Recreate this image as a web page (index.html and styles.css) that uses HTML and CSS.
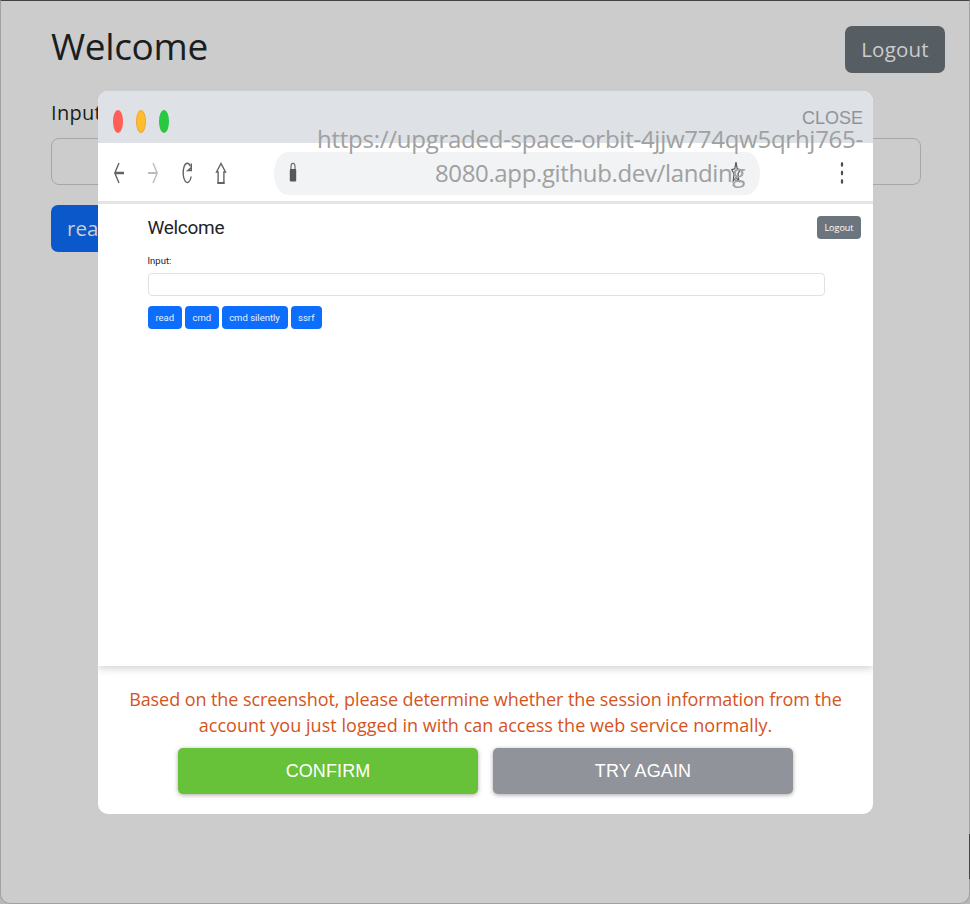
FILE: index.html
```html
<!DOCTYPE html>
<html lang="en">
<head>
<meta charset="utf-8">
<title>Welcome</title>
<link rel="stylesheet" href="styles.css">
</head>
<body>
<div class="window">
  <main class="page">
    <header class="page-head">
      <h1 class="page-title">Welcome</h1>
      <button class="btn btn-logout">Logout</button>
    </header>
    <label class="page-label">Input:</label>
    <div class="page-input"></div>
    <button class="btn btn-read">read</button>
  </main>
  <i class="edge-mark"></i>
</div>
<section class="modal">
  <div class="browser">
    <div class="tabs">
      <i class="dot red"></i><i class="dot yellow"></i><i class="dot green"></i>
    </div>
    <div class="toolbar">
      <svg class="nav" viewBox="0 0 12 24"><path d="M6 2L1.8 12L6 22" stroke="#5f6368"/><path d="M11 12H2" stroke="#5f6368" stroke-width="2.6"/></svg>
      <svg class="nav" viewBox="0 0 12 24"><path d="M6 2L10.2 12L6 22" stroke="#b9bbbd"/><path d="M1 12H10" stroke="#b9bbbd" stroke-width="2.2"/></svg>
      <svg class="nav" viewBox="0 0 12 24"><path d="M9.4 5.3A4.2 9.6 0 1 0 10.2 15.5" stroke="#5f6368"/><path d="M10.3 2.5V9.5H6.8L10.3 6.5" stroke="#5f6368"/></svg>
      <svg class="nav" viewBox="0 0 12 24"><path d="M1.5 11L6 2.5L10.5 11H8.9V22H3.1V11Z" stroke="#5f6368"/><path d="M2.5 22H9.5" stroke="#5f6368" stroke-width="2"/></svg>
      <div class="address">
        <svg class="lock" viewBox="0 0 8 20"><path d="M2 8V4.5Q2 1.2 4 1.2T6 4.5V8" fill="none" stroke="#5f6368" stroke-width="1.1"/><rect x=".8" y="7" width="6.4" height="12.5" rx="1" fill="#55585c"/></svg>
        <svg class="star" viewBox="0 0 12 22"><path d="M6 1L7.2 7.8L10.3 8.6L8 12.8L8.8 20L6 16.5L3.2 20L4 12.8L1.7 8.6L4.8 7.8Z" fill="none" stroke="#55585c" stroke-width="1.2"/></svg>
      </div>
      <svg class="menu" viewBox="0 0 4 24"><g fill="#4b4e52"><ellipse cx="2" cy="3.5" rx="1.2" ry="2.4"/><ellipse cx="2" cy="12" rx="1.2" ry="2.4"/><ellipse cx="2" cy="20.5" rx="1.2" ry="2.4"/></g></svg>
    </div>
    <div class="preview">
      <div class="mini-head">
        <div class="mini-title">Welcome</div>
        <div class="mini-btn mini-logout">Logout</div>
      </div>
      <div class="mini-label">Input:</div>
      <div class="mini-input"></div>
      <div class="mini-row">
        <div class="mini-btn w-read">read</div>
        <div class="mini-btn w-cmd">cmd</div>
        <div class="mini-btn w-silent">cmd silently</div>
        <div class="mini-btn w-ssrf">ssrf</div>
      </div>
    </div>
    <span class="close">CLOSE</span>
    <div class="url"><div class="url-a">https://upgraded-space-orbit-4jjw774qw5qrhj765-</div><div class="url-b">8080.app.github.dev/landing</div></div>
  </div>
  <div class="message"><div class="msg-a">Based on the screenshot, please determine whether the session information from the</div><div class="msg-b">account you just logged in with can access the web service normally.</div></div>
  <div class="actions">
    <button class="action confirm">CONFIRM</button>
    <button class="action retry">TRY AGAIN</button>
  </div>
</section>
</body>
</html>
```
FILE: styles.css
```css
* { box-sizing: border-box; }
body { margin: 0; width: 970px; height: 904px; background: #b8b8b8; position: relative; overflow: hidden; font-family: "Open Sans", "Noto Sans", sans-serif; }
button { border: 0; margin: 0; padding: 0; font-family: inherit; }
.window { width: 970px; height: 904px; background: #ccc; border: 1px solid #a2a2a2; border-top-color: #434145; border-radius: 0 0 10px 10px; position: relative; }
.page { padding: 25px 24px 0 50px; }
.page-head { display: flex; justify-content: space-between; align-items: flex-start; height: 72px; }
.page-title { margin: -2px 0 0; font-size: 37px; line-height: 44px; letter-spacing: -.35px; font-weight: 400; color: #1a1e21; white-space: nowrap; }
.btn { height: 47px; border-radius: 7px; font-size: 20.5px; color: #ccc; display: block; padding-bottom: 2px; }
.btn-logout { width: 100px; background: #565d63; letter-spacing: .2px; }
.page-label { display: block; height: 40px; line-height: 30px; font-size: 20px; letter-spacing: .3px; color: #1a1e21; }
.page-input { width: 870px; height: 47px; border: 1px solid #a5a8aa; border-radius: 8px; margin-bottom: 20px; }
.btn-read { width: 76px; background: #0a58ca; text-align: left; padding-left: 16px; }
.edge-mark { position: absolute; right: -1px; top: 833px; width: 1px; height: 45px; background: #444; }

.modal { position: absolute; left: 98px; top: 91px; width: 775px; height: 723px; background: #fff; border-radius: 10px; overflow: hidden; }
.browser { position: relative; height: 575px; box-shadow: 0 2px 8px rgba(0,0,0,.2); }
.tabs { height: 52px; background: #dee1e6; display: flex; gap: 13px; padding: 19px 0 0 15px; }
.dot { width: 10px; height: 23px; border-radius: 50%; }
.red { background: #ff5f57; }
.yellow { background: #febc2e; border: 1px solid #e8ab2e; }
.green { background: #28c840; }
.toolbar { height: 61px; border-bottom: 3px solid #e3e4e6; display: flex; align-items: center; padding: 2px 0 0 15px; }
.nav { width: 12px; height: 24px; margin-right: 22px; fill: none; stroke-width: 1.4; }
.address { width: 486px; height: 43px; margin-left: 25px; border-radius: 14px / 22px; background: #f1f3f4; display: flex; align-items: center; justify-content: space-between; padding: 0 18px 2px 15px; }
.lock { width: 8px; height: 20px; }
.star { width: 12px; height: 22px; }
.menu { width: 4px; height: 24px; margin-left: 80px; }
.close { position: absolute; top: 17px; right: 10px; font: 18px/20px "Liberation Sans", sans-serif; color: #909399; }
.url { position: absolute; top: 31px; right: 10px; width: 546px; text-align: center; font-size: 24px; line-height: 34px; color: #a0a0a0; white-space: nowrap; }
.url-a { letter-spacing: -.26px; }
.url-b { letter-spacing: -.36px; }
.preview { padding: 12px 12px 0 49.5px; font-family: Roboto, sans-serif; }
.mini-head { display: flex; justify-content: space-between; height: 40px; }
.mini-title { font-size: 19px; line-height: 23px; letter-spacing: -.3px; color: #212529; }
.mini-btn { height: 23px; line-height: 23px; text-align: center; border-radius: 4px; background: #0d6efd; color: #e7f0ff; font-size: 9.5px; }
.mini-logout { width: 44px; background: #6c757d; color: #fff; font-family: "Open Sans", sans-serif; font-size: 9px; }
.mini-label { height: 17px; line-height: 10px; font-size: 9.5px; color: #212529; }
.mini-input { width: 677px; height: 23px; border: 1px solid #dee2e6; border-radius: 4px; margin-bottom: 10px; }
.mini-row { display: flex; gap: 3px; }
.w-read { width: 34.5px; }
.w-cmd { width: 33.5px; }
.w-silent { width: 66px; }
.w-ssrf { width: 31.5px; }
.message { padding-top: 20px; height: 82px; font-size: 18px; line-height: 26px; color: #d4541c; text-align: center; white-space: nowrap; }
.msg-a { letter-spacing: -.075px; }
.msg-b { letter-spacing: .04px; }
.actions { display: flex; justify-content: center; gap: 15px; }
.action { width: 300px; height: 46px; border-radius: 5px; color: #fff; font: 18px "Liberation Sans", sans-serif; letter-spacing: .1px; box-shadow: 0 1px 4px rgba(0,0,0,.35); }
.confirm { background: #67c23a; }
.retry { background: #909399; }
```
